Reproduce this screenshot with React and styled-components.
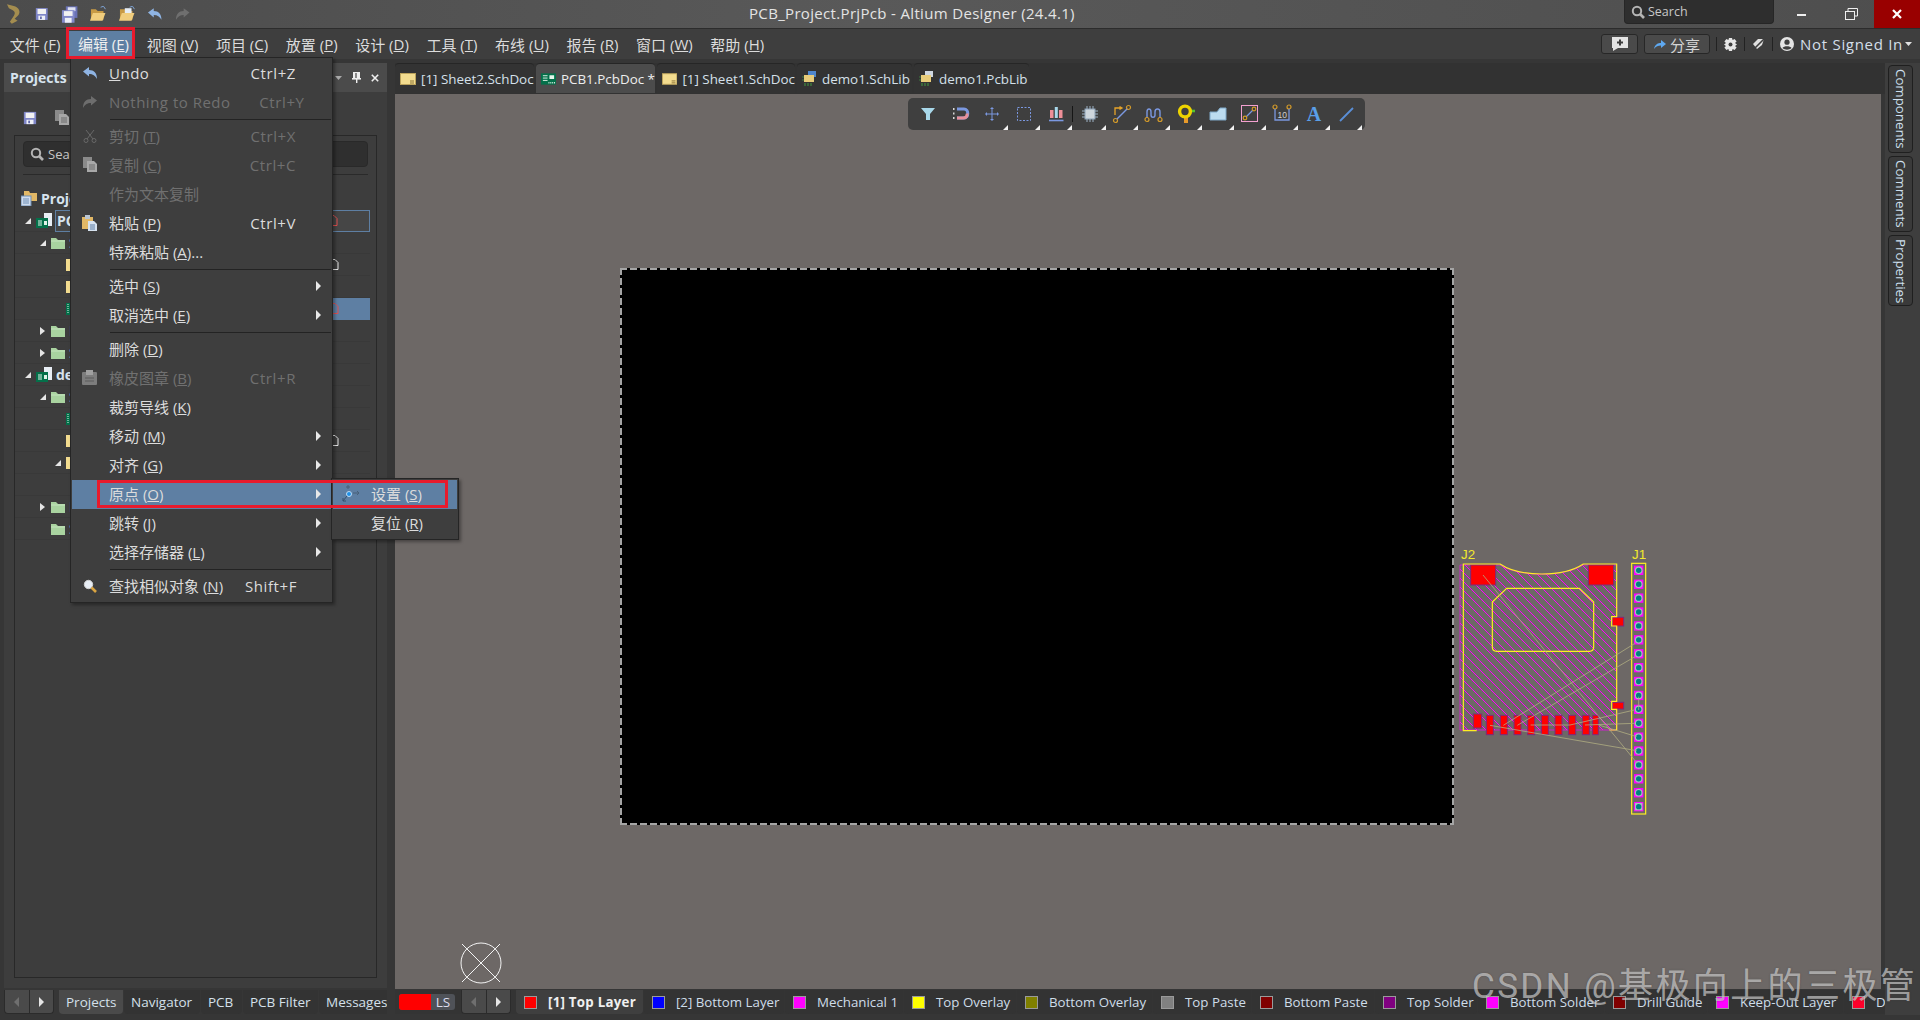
import React from 'react';
import styled, { createGlobalStyle, css } from 'styled-components';

const FONT = `"Open Sans", "Noto Sans CJK SC", sans-serif`;

const GlobalStyle = createGlobalStyle`
  html, body {
    margin: 0;
    padding: 0;
    background: #363636;
    font-family: ${FONT};
    overflow: hidden;
  }
  * { box-sizing: border-box; }
`;

const Page = styled.div`
  position: relative;
  width: 1920px;
  height: 1020px;
  display: flex;
  flex-direction: column;
  overflow: hidden;
  background: #363636;
  color: #d8d8d8;
`;

/* ---- title bar ---- */
const TitleBar = styled.div`
  height: 29px;
  flex: none;
  display: flex;
  align-items: flex-start;
  background: linear-gradient(90deg, #4c4c4c, #595959 45%, #4e4e4e);
  border-bottom: 1px solid #2c2c2c;
`;
const QuickIcons = styled.div`
  width: 190px;
  height: 28px;
  padding-left: 6px;
  display: flex;
  align-items: center;
  gap: 12px;
`;
const TitleText = styled.div`
  margin-left: 559px;
  line-height: 26px;
  font-size: 15px;
  letter-spacing: 0.33px;
  color: #e4e4e4;
  white-space: nowrap;
`;
const SearchBox = styled.div`
  margin-left: auto;
  width: 150px;
  height: 24px;
  padding-left: 6px;
  display: flex;
  align-items: center;
  gap: 3px;
  font-size: 12.5px;
  color: #c8c8c8;
  background: #2e2e2e;
  border: 1px solid #262626;
  border-top: 0;
  border-radius: 0 0 4px 4px;
`;
const WinButtons = styled.div`
  display: flex;
`;
const WinButton = styled.div`
  width: ${p => p.$w}px;
  height: 28px;
  display: flex;
  align-items: center;
  justify-content: center;
  background: ${p => (p.$close ? '#990000' : 'transparent')};
`;

/* ---- menu bar ---- */
const MenuBar = styled.div`
  height: 30px;
  flex: none;
  padding-left: 1px;
  padding-right: 8px;
  display: flex;
  align-items: stretch;
  background: #3e3e3e;
`;
const MenuItem = styled.div`
  position: relative;
  padding: 0 8.8px;
  display: flex;
  align-items: center;
  font-size: 15px;
  white-space: pre;
  color: #dcdcdc;
  ${p => p.$active && css`
    background: #5e7fa3;
    color: #f0f0f0;
    margin: 2px 3.6px 3px 0;
    padding-right: 5.2px;
  `}
`;
const MenuRight = styled.div`
  margin-left: auto;
  display: flex;
  align-items: center;
`;
const BarButton = styled.div`
  height: 20px;
  margin-right: 6px;
  width: ${p => p.$w}px;
  display: flex;
  align-items: center;
  justify-content: center;
  gap: 4px;
  font-size: 15px;
  color: #d5d5d5;
  background: #4a4a4a;
  border: 1px solid #272727;
  border-radius: 3px;
`;
const BarDivider = styled.div`
  width: 1px;
  height: 14px;
  background: #222;
`;
const BarIcon = styled.div`
  width: 27px;
  display: flex;
  justify-content: center;
`;
const UserName = styled.div`
  font-size: 15px;
  letter-spacing: 0.7px;
  color: #d4dfe9;
  margin-right: 2px;
`;

/* ---- annotation boxes ---- */
const RedFrame = styled.div`
  position: absolute;
  border: 3px solid #e81a2c;
  pointer-events: none;
  z-index: 30;
`;
const EditFrame = styled(RedFrame)`
  inset: -4px -1px -3px -3px;
`;
const OriginFrame = styled(RedFrame)`
  left: 26px;
  top: 422px;
  width: 351px;
  height: 28px;
`;

/* ---- drop down ---- */
const Dropdown = styled.div`
  position: absolute;
  left: 70px;
  top: 57px;
  width: 263px;
  height: 546px;
  padding: 1px;
  background: #3e3e3e;
  border: 1px solid #252525;
  box-shadow: 2px 2px 3px rgba(0, 0, 0, 0.35);
  z-index: 20;
`;
const SubMenu = styled.div`
  position: absolute;
  left: 260px;
  top: 420px;
  width: 128px;
  height: 62px;
  padding: 1px;
  background: #3e3e3e;
  border: 1px solid #252525;
  box-shadow: 2px 2px 3px rgba(0, 0, 0, 0.35);
`;
const DropRow = styled.div`
  height: 29px;
  padding-bottom: 2px;
  display: grid;
  grid-template-columns: ${p => (p.$sub ? '38px 1fr' : '37px 1fr 74px 35px')};
  align-items: center;
  font-size: 15px;
  white-space: pre;
  color: ${p => (p.$off ? '#707070' : '#dcdcdc')};
  background: ${p => (p.$hot ? '#5e7fa3' : 'transparent')};
`;
const DropIcon = styled.div`
  display: flex;
  justify-content: center;
  padding-right: 2px;
`;
const LatinLabel = styled.span`
  letter-spacing: 0.5px;
`;
const Shortcut = styled.div`
  text-align: right;
  letter-spacing: 0.6px;
`;
const SubArrow = styled.div`
  justify-self: end;
  margin-right: 10px;
  width: 0;
  height: 0;
  border-left: 5px solid #e8e8e8;
  border-top: 5px solid transparent;
  border-bottom: 5px solid transparent;
`;
const DropSep = styled.div`
  height: 5px;
  margin-left: 38px;
  display: flex;
  align-items: center;
  &::after {
    content: '';
    flex: 1;
    height: 1px;
    background: #232323;
  }
`;

/* ---- workspace ---- */
const Workspace = styled.div`
  flex: 1;
  min-height: 0;
  display: flex;
`;
const LeftColumn = styled.div`
  width: 395px;
  flex: none;
  padding: 4px 8px 6px 4px;
  display: flex;
  flex-direction: column;
`;
const Panel = styled.div`
  height: 925px;
  display: flex;
  flex-direction: column;
  background: #3d3d3d;
`;
const PanelHead = styled.div`
  height: 29px;
  flex: none;
  padding: 0 8px 0 6px;
  display: flex;
  align-items: center;
  background: #4b4b4b;
  font-size: 14px;
  font-weight: 700;
  color: #d7e3ee;
`;
const PanelHeadIcons = styled.div`
  margin-left: auto;
  display: flex;
  align-items: center;
  gap: 10px;
`;
const PanelTools = styled.div`
  height: 43px;
  flex: none;
  padding: 8px 0 0 19px;
  display: flex;
  align-items: center;
  gap: 17px;
`;
const TreeBox = styled.div`
  flex: 1;
  margin: 0 10px 10px;
  border: 1px solid #282828;
  display: flex;
  flex-direction: column;
`;
const TreeSearch = styled.div`
  height: 26px;
  flex: none;
  margin: 5px 8px 0;
  padding-left: 6px;
  display: flex;
  align-items: center;
  gap: 4px;
  font-size: 13px;
  color: #c6c6c6;
  background: #2f2f2f;
  border: 1px solid #292929;
  border-radius: 4px;
`;
const TreeRule = styled.div`
  height: 1px;
  flex: none;
  margin: 7px 8px 13px;
  background: #2a2a2a;
`;
const TreeRow = styled.div`
  height: 22px;
  flex: none;
  padding-left: ${p => (p.$level < 0 ? 6 : 6 + p.$level * 15)}px;
  margin-right: 6px;
  display: flex;
  align-items: center;
  font-size: 14px;
  border-bottom: 1px solid ${p => (p.$level < 0 ? 'transparent' : '#393939')};
`;
const TreeArrow = styled.div`
  width: 15px;
  flex: none;
  display: flex;
  padding-left: 4px;
`;
const TreeLabel = styled.div`
  flex: 1;
  height: 22px;
  margin-left: 3px;
  padding: 0 31px 0 1px;
  display: flex;
  align-items: center;
  font-weight: ${p => (p.$bold ? 700 : 400)};
  color: ${p => (p.$bold ? '#d7e3ee' : '#dcdcdc')};
  white-space: nowrap;
  ${p => p.$outlined && css`
    background: #464646;
    border: 1px solid #5e7fa3;
  `}
  ${p => p.$selected && css`
    background: #5e7fa3;
  `}
`;
const TreeName = styled.span`
  flex: 1;
`;

const PanelTabs = styled.div`
  height: 24px;
  margin-top: 2px;
  display: flex;
  overflow: hidden;
`;
const NavPair = styled.div`
  width: 50px;
  height: 24px;
  flex: none;
  display: flex;
  background: #4a4a4a;
  border-radius: 0 0 4px 4px;
  border: 1px solid #2b2b2b;
  border-top: 0;
`;
const PanelNav = styled(NavPair)`
  margin-right: 5px;
`;
const NavCell = styled.div`
  flex: 1;
  display: flex;
  align-items: center;
  justify-content: center;
  & + & { border-left: 1px solid #2b2b2b; }
`;
const NavArrow = styled.div`
  width: 0;
  height: 0;
  border-top: 5px solid transparent;
  border-bottom: 5px solid transparent;
  ${p => (p.$left
    ? 'border-right: 5px solid #6f6f6f;'
    : 'border-left: 5px solid #e6e6e6;')}
`;
const PanelTab = styled.div`
  width: ${p => p.$w}px;
  flex: none;
  margin-right: 1px;
  padding-left: 7px;
  display: flex;
  align-items: center;
  font-size: 13.5px;
  white-space: nowrap;
  overflow: hidden;
  color: #d5e0ea;
  background: ${p => (p.$active ? '#4a4a4a' : '#333333')};
  border-radius: 0 0 4px 4px;
`;

/* ---- centre ---- */
const Centre = styled.div`
  flex: 1;
  min-width: 0;
  padding-top: 4px;
  display: flex;
  flex-direction: column;
`;
const DocTabs = styled.div`
  height: 31px;
  flex: none;
  display: flex;
  gap: 2px;
  background: #323232;
`;
const DocTab = styled.div`
  width: ${p => p.$w}px;
  height: 30px;
  padding-left: 5px;
  display: flex;
  align-items: center;
  gap: 5px;
  font-size: 13.4px;
  white-space: nowrap;
  color: ${p => (p.$active ? '#eeeeee' : '#d5e0ea')};
  background: ${p => (p.$active ? '#4c4c4c' : '#333333')};
  border-radius: 4px 4px 0 0;
  border-top: 1px solid #262626;
`;
const Canvas = styled.div`
  position: relative;
  height: 895px;
  flex: none;
  margin-right: 4px;
  background: #6d6866;
`;
const FloatBar = styled.div`
  position: absolute;
  left: 513px;
  top: 4px;
  height: 32px;
  padding: 0 3px 0 4px;
  display: flex;
  align-items: center;
  background: #3f3f3f;
  border-radius: 5px;
`;
const ToolBtn = styled.div`
  position: relative;
  width: 32px;
  height: 32px;
  display: flex;
  align-items: center;
  justify-content: center;
  ${p => p.$corner && css`
    &::after {
      content: '';
      position: absolute;
      right: 0;
      bottom: 0;
      border-left: 5px solid transparent;
      border-bottom: 5px solid #f2f2f2;
    }
  `}
`;
const ToolSep = styled.div`
  width: 1px;
  height: 16px;
  margin-right: 1px;
  background: #161616;
`;
const Board = styled.div`
  position: absolute;
  left: 225px;
  top: 174px;
  width: 834px;
  height: 557px;
  background-color: #000;
  background-repeat: no-repeat;
  background-image:
    repeating-linear-gradient(90deg, #a5a5a5 0 7px, transparent 7px 10px),
    repeating-linear-gradient(90deg, #a5a5a5 0 7px, transparent 7px 10px),
    repeating-linear-gradient(0deg, #a5a5a5 0 7px, transparent 7px 10px),
    repeating-linear-gradient(0deg, #a5a5a5 0 7px, transparent 7px 10px);
  background-size: 100% 2px, 100% 2px, 2px 100%, 2px 100%;
  background-position: top left, bottom left, top left, top right;
`;
const PcbPart = styled.svg`
  position: absolute;
  left: 1045px;
  top: 446px;
`;
const OriginMark = styled.svg`
  position: absolute;
  left: 65px;
  top: 848px;
`;
const LayerBar = styled.div`
  height: 24px;
  margin-top: 1px;
  padding-left: 4px;
  display: flex;
  background: #343434;
  overflow: hidden;
`;
const LsGroup = styled.div`
  width: 56px;
  height: 16px;
  margin: 4px 6px 0 0;
  flex: none;
  display: flex;
  border-radius: 3px;
  overflow: hidden;
  background: #4f5258;
  font-size: 13.5px;
  line-height: 16px;
  color: #dde;
`;
const LsSwatch = styled.div`
  width: 32px;
  background: #ff0000;
`;
const LsText = styled.div`
  flex: 1;
  text-align: center;
`;
const LayerNav = styled(NavPair)`
  margin-right: 5px;
`;
const LayerTab = styled.div`
  width: ${p => p.$w}px;
  flex: none;
  margin-right: 1px;
  padding-left: 8px;
  display: flex;
  align-items: center;
  gap: 11px;
  font-size: 13.3px;
  font-weight: ${p => (p.$active ? 700 : 400)};
  letter-spacing: ${p => (p.$active ? '0.25px' : '0')};
  white-space: nowrap;
  overflow: hidden;
  color: ${p => (p.$active ? '#f0f0f0' : '#cfdde9')};
  background: ${p => (p.$active ? '#3f3f3f' : '#333333')};
  border-radius: 0 0 4px 4px;
`;
const LayerSwatch = styled.div`
  width: 13px;
  height: 13px;
  flex: none;
  background: ${p => p.$color};
  border: 1px solid #9a9a9a;
`;

/* ---- right strip ---- */
const RightStrip = styled.div`
  width: 35px;
  flex: none;
  margin: 4px 0 5px;
  padding: 2px 7px 0 3px;
  display: flex;
  flex-direction: column;
  gap: 3px;
  background: #3e3e3e;
`;
const SideTab = styled.div`
  height: ${p => p.$h}px;
  display: flex;
  align-items: center;
  justify-content: flex-start;
  padding-top: 3px;
  writing-mode: vertical-rl;
  font-size: 13.3px;
  color: #cfe0f0;
  background: #3a3a3a;
  border: 1px solid #1f1f1f;
  border-radius: 4px;
`;

const Watermark = styled.div`
  position: absolute;
  left: 1472px;
  top: 965px;
  font-size: 35px;
  letter-spacing: 2.4px;
  line-height: 44px;
  font-family: "Roboto", "Noto Sans CJK SC", sans-serif;
  color: rgba(222, 222, 222, 0.62);
  text-shadow: 0 0 2px rgba(60, 60, 60, 0.4);
  white-space: nowrap;
  z-index: 40;
`;

/* ---- icons ---- */
const Logo = () => (
  <svg width="16" height="22" viewBox="0 0 16 22" style={{ marginRight: 2 }}>
    <path d="M1 1 L9 3 C14 5 15 9 13 12 L9 16 L12 18 L6 21 L4 19 L8 13 C10 10 9 8 7 7 L3 5 Z" fill="#a48d4f" />
  </svg>
);
const Floppy = ({ size = 16 }) => (
  <svg width={size} height={size} viewBox="0 0 16 16">
    <rect x="1" y="1" width="14" height="14" fill="#7f86c8" />
    <rect x="3" y="2" width="10" height="6" fill="#f2f2f2" />
    <rect x="4" y="10" width="8" height="5" fill="#eef0f8" />
    <rect x="6" y="11" width="2" height="3" fill="#5e65a8" />
  </svg>
);
const FloppyPair = () => (
  <svg width="18" height="17" viewBox="0 0 18 17">
    <rect x="5" y="0" width="12" height="12" fill="#6a72b5" />
    <rect x="7" y="1" width="8" height="4" fill="#dfe2f2" />
    <rect x="1" y="4" width="13" height="13" fill="#8289c9" />
    <rect x="3" y="5" width="9" height="5" fill="#f2f2f2" />
    <rect x="4" y="12" width="7" height="5" fill="#eef0f8" />
  </svg>
);
const FolderOpen = ({ doc }) => (
  <svg width="17" height="16" viewBox="0 0 17 16">
    <path d="M1 3 H6 L8 5 H14 V14 H1 Z" fill="#c79a45" />
    {doc && <rect x="6" y="2" width="7" height="8" fill="#e6eef7" />}
    <path d="M3 7 H16 L13 15 H0 Z" fill="#f0cd7d" />
    <path d="M11 1 L14 0 L16 3" stroke="#7fa5d8" fill="none" />
  </svg>
);
const ArrowBack = ({ color = '#8fb4e3', flip }) => (
  <svg width="16" height="14" viewBox="0 0 16 14">
    <path
      d="M1 5.5 L7 1 V4 C12 4 15 7 15 13 C13 9.5 11 8 7 8 V10.5 Z"
      fill={color}
      transform={flip ? 'matrix(-1 0 0 1 16 0)' : undefined}
    />
  </svg>
);
const Scissors = () => (
  <svg width="14" height="14" viewBox="0 0 14 14" fill="none" stroke="#686868">
    <path d="M3 1 L10 10 M11 1 L4 10" />
    <circle cx="3" cy="11.5" r="2" />
    <circle cx="11" cy="11.5" r="2" />
  </svg>
);
const CopyIcon = () => (
  <svg width="16" height="15" viewBox="0 0 16 15">
    <rect x="1" y="0" width="9" height="11" fill="#8a8a8a" />
    <path d="M5 4 H12 L15 7 V15 H5 Z" fill="#a8a8a8" />
    <path d="M7 8 H13 M7 10 H13 M7 12 H13" stroke="#6c6c6c" />
  </svg>
);
const PasteIcon = () => (
  <svg width="16" height="16" viewBox="0 0 16 16">
    <rect x="0" y="2" width="11" height="12" fill="#e2b866" />
    <rect x="3" y="0" width="5" height="4" fill="#b9c5d2" />
    <path d="M6 6 H12 L15 9 V16 H6 Z" fill="#d7e3f0" />
    <path d="M8 10 H13 M8 12 H13 M8 14 H13" stroke="#5f7ea5" />
  </svg>
);
const StampIcon = () => (
  <svg width="15" height="15" viewBox="0 0 15 15">
    <rect x="0" y="2" width="15" height="13" rx="1" fill="#7d7d7d" />
    <rect x="4" y="0" width="7" height="5" fill="#a0a0a0" />
    <path d="M3 8 H12 M3 11 H12" stroke="#5c5c5c" />
  </svg>
);
const Magnifier = ({ lens = '#e8eef5', handle = '#d9a441', size = 14 }) => (
  <svg width={size} height={size} viewBox="0 0 14 14">
    <circle cx="5.5" cy="5.5" r="4.2" fill={lens} stroke="#d0d0d0" />
    <path d="M8.5 8.5 L13 13" stroke={handle} strokeWidth="2.6" />
  </svg>
);
const SearchGlass = ({ size = 14 }) => (
  <svg width={size} height={size} viewBox="0 0 14 14" fill="none" stroke="#b4b4b4" strokeWidth="2">
    <circle cx="6" cy="6" r="4.2" />
    <path d="M9 9 L13 13" strokeWidth="2.6" />
  </svg>
);
const OriginIcon = () => (
  <svg width="18" height="17" viewBox="0 0 18 17" fill="none">
    <path d="M6 0 V4 M4 2 H8" stroke="#486078" />
    <path d="M11 8 H17 M15 6 L17 8 L15 10" stroke="#486078" />
    <path d="M5 11 L1 16 M1 13 V16 H4" stroke="#35506c" />
    <circle cx="7" cy="9" r="2.5" fill="#1e90e8" stroke="#bcdcf5" />
  </svg>
);
const ChatPlus = () => (
  <svg width="18" height="16" viewBox="0 0 18 16">
    <path d="M1 1 H17 V12 H7 L2 15 V12 H1 Z" fill="#e4e4e4" />
    <path d="M9 3.5 V9.5 M6 6.5 H12" stroke="#3c3c3c" strokeWidth="2" />
  </svg>
);
const ShareArrow = () => (
  <svg width="12" height="11" viewBox="0 0 12 11">
    <path d="M0 10 C1 5 4 4 7 4 V1 L12 5 L7 9 V6.5 C4 6.5 2 7 0 10 Z" fill="#5ea8f0" />
  </svg>
);
const Gear = () => (
  <svg width="13" height="13" viewBox="0 0 13 13">
    <path d="M5 0 H8 L8.6 2 L10.6 1 L12.6 3.4 L11 5 L13 6.5 L11 8 L12.6 9.6 L10.6 12 L8.6 11 L8 13 H5 L4.4 11 L2.4 12 L0.4 9.6 L2 8 L0 6.5 L2 5 L0.4 3.4 L2.4 1 L4.4 2 Z" fill="#e6e6e6" />
    <circle cx="6.5" cy="6.5" r="2" fill="#3e3e3e" />
  </svg>
);
const NoPlug = () => (
  <svg width="14" height="14" viewBox="0 0 14 14">
    <path d="M1 7 L6 2 H12 L10 8 L5 12 Z" fill="#e0e0e0" />
    <path d="M1 13 L13 1" stroke="#3e3e3e" strokeWidth="1.6" />
  </svg>
);
const User = () => (
  <svg width="14" height="14" viewBox="0 0 14 14">
    <circle cx="7" cy="7" r="7" fill="#e4e4e4" />
    <circle cx="7" cy="5.2" r="2.6" fill="#3e3e3e" />
    <path d="M2.4 11 C4 8.5 10 8.5 11.6 11 C9 13.2 5 13.2 2.4 11 Z" fill="#3e3e3e" />
  </svg>
);
const Caret = ({ color = '#e0e0e0' }) => (
  <svg width="7" height="4" viewBox="0 0 7 4">
    <path d="M0 0 H7 L3.5 4 Z" fill={color} />
  </svg>
);
const SheetDoc = () => (
  <svg width="16" height="12" viewBox="0 0 16 12">
    <rect x="0.5" y="0.5" width="15" height="11" fill="#f3dc8f" stroke="#bca35c" />
    <path d="M10 8 H14 M10 10 H14" stroke="#8a7438" />
  </svg>
);
const PcbDoc = () => (
  <svg width="16" height="12" viewBox="0 0 16 12">
    <rect width="16" height="12" fill="#04704a" />
    <path d="M2 2.5 H7 M2 5 H7 M2 7.5 H7" stroke="#e6f5ec" />
    <rect x="9" y="2" width="5" height="4" fill="#e6f5ec" />
    <path d="M8 10 H15" stroke="#e6f5ec" strokeDasharray="1 1" strokeWidth="1.5" />
  </svg>
);
const LibDoc = ({ pcb }) => (
  <svg width="15" height="15" viewBox="0 0 15 15">
    <rect x="6" y="0" width="8" height="6" fill={pcb ? '#cfd7e0' : '#4f86cc'} />
    <rect x="2" y="4" width="10" height="7" fill="#e8cc7a" />
    <path d="M3 12 V15 M6 12 V15 M9 12 V15" stroke="#3e7c3e" strokeWidth="1.4" />
    <path d="M0 6 H2 M0 9 H2" stroke="#3e7c3e" />
  </svg>
);
const FolderGreen = () => (
  <svg width="14" height="12" viewBox="0 0 14 12">
    <path d="M0 1 H5 L7 3 H14 V12 H0 Z" fill="#a9d3a0" />
    <path d="M0 4 H14" stroke="#c6e4bf" />
  </svg>
);
const YellowFile = () => (
  <svg width="14" height="12" viewBox="0 0 14 12">
    <rect width="14" height="12" fill="#f3dc8f" />
  </svg>
);
const PcbFile = () => (
  <svg width="14" height="12" viewBox="0 0 14 12">
    <rect width="14" height="12" fill="#04704a" />
    <path d="M2 1 V11" stroke="#dff2e8" strokeDasharray="1 1" />
  </svg>
);
const ProjectIcon = () => (
  <svg width="16" height="16" viewBox="0 0 16 16">
    <rect x="8" y="0" width="8" height="13" fill="#e8eef5" />
    <rect x="0" y="5" width="12" height="10" fill="#04704a" />
    <path d="M2 8 H6 M2 10 H6 M2 12 H6" stroke="#dff2e8" />
    <rect x="8" y="8" width="3" height="4" fill="#dff2e8" />
  </svg>
);
const GroupIcon = () => (
  <svg width="16" height="15" viewBox="0 0 16 15">
    <path d="M3 0 H8 L9 2 H16 V10 H3 Z" fill="#e2b866" />
    <rect x="0" y="5" width="10" height="10" fill="#cfdcee" stroke="#6f8fb5" />
    <path d="M2 8 H8 M2 10 H8 M2 12 H8" stroke="#6f8fb5" />
  </svg>
);
const StatusDoc = ({ color }) => (
  <svg width="10" height="11" viewBox="0 0 10 11" fill="none" stroke={color}>
    <path d="M1 0.5 H6 L9 3.5 V10.5 H1 Z" />
  </svg>
);
const Pin = () => (
  <svg width="9" height="11" viewBox="0 0 9 11">
    <rect x="1" y="0" width="7" height="7" fill="#efefef" />
    <rect x="3" y="1" width="2" height="5" fill="#8a8a8a" />
    <rect x="0" y="6" width="9" height="1.6" fill="#efefef" />
    <rect x="4" y="7" width="1.4" height="4" fill="#efefef" />
  </svg>
);
const CloseX = ({ size = 9, color = '#efefef', w = 2 }) => (
  <svg width={size} height={size} viewBox="0 0 10 10">
    <path d="M1 1 L9 9 M9 1 L1 9" stroke={color} strokeWidth={w} />
  </svg>
);
const ExpandedArrow = () => (
  <svg width="6" height="6" viewBox="0 0 6 6">
    <path d="M6 0 V6 H0 Z" fill="#e6e6e6" />
  </svg>
);
const CollapsedArrow = () => (
  <svg width="5" height="8" viewBox="0 0 5 8">
    <path d="M0 0 L5 4 L0 8 Z" fill="#e6e6e6" />
  </svg>
);

const T = ({ children }) => (
  <svg width="20" height="20" viewBox="0 0 20 20" fill="none">{children}</svg>
);
const Ring = ({ x, y, r = 2 }) => <circle cx={x} cy={y} r={r} stroke="#d39a2a" strokeWidth="1.2" fill="none" />;
const toolIcons = [
  <T><path d="M3 4 H17 L12 10 V16 H8 V10 Z" fill="#a8d8ea" /></T>,
  <T>
    <path d="M3 5 H4.5 M3 9.5 H4.5 M3 14 H4.5" stroke="#d8d8d8" strokeWidth="2" />
    <path d="M7 5 H14 C19 5 19 14 14 14 H7" stroke="#7b98e0" strokeWidth="3" />
    <path d="M13 14 C16 14 17.5 12 17 9.5" stroke="#e8909a" strokeWidth="3" />
    <path d="M7 14 H13" stroke="#e8909a" strokeWidth="3" />
  </T>,
  <T><path d="M10 3 V17 M3 10 H17 M8.5 4.5 H11.5 M8.5 15.5 H11.5 M4.5 8.5 V11.5 M15.5 8.5 V11.5" stroke="#7b98e0" /></T>,
  <T><rect x="3.5" y="3.5" width="13" height="13" stroke="#7b98e0" strokeDasharray="2 1.5" /></T>,
  <T>
    <rect x="4" y="6" width="3.5" height="8" fill="#ee8f98" />
    <rect x="8.8" y="3" width="3" height="11" fill="#a8d8ea" />
    <rect x="13" y="6" width="3.5" height="8" fill="#ee8f98" />
    <path d="M3 16.5 H17.5" stroke="#7b98e0" strokeWidth="1.6" />
  </T>,
  <T>
    <rect x="5" y="5" width="10" height="10" fill="#ced6dd" stroke="#8aa0b5" />
    <path d="M7 2 V5 M10 2 V5 M13 2 V5 M7 15 V18 M10 15 V18 M13 15 V18 M2 7 H5 M2 10 H5 M2 13 H5 M15 7 H18 M15 10 H18 M15 13 H18" stroke="#9db2c5" />
  </T>,
  <T>
    <path d="M3 11 V4 H9 M7.5 2.5 L10 4 L7.5 5.5" stroke="#e6a42a" strokeWidth="1.3" />
    <Ring x={3.5} y={16.5} />
    <Ring x={16.5} y={3.5} />
    <path d="M5 15 L15 5" stroke="#7b98e0" strokeWidth="1.5" />
  </T>,
  <T>
    <path d="M3 14 V8 C3 4 7 4 7 8 V11 C7 14 11 14 11 11 V8 C11 4 16 4 16 8 V14" stroke="#7b98e0" strokeWidth="1.4" />
    <Ring x={3} y={15.5} />
    <Ring x={16} y={15.5} />
  </T>,
  <T>
    <path d="M14 7 H19" stroke="#56c22c" strokeWidth="2.6" />
    <rect x="8" y="12" width="4" height="7" fill="#e89a2a" />
    <circle cx="9" cy="7.5" r="5.4" stroke="#eed400" strokeWidth="3.4" />
  </T>,
  <T><path d="M2 8 H9 L12 4 H18 V16 H2 Z" fill="#bcdcf0" stroke="#7ea8c8" /></T>,
  <T>
    <rect x="1.5" y="1.5" width="16" height="16" stroke="#f2a0d0" />
    <path d="M6 13 L13 6" stroke="#7b98e0" strokeWidth="1.3" />
    <Ring x={5} y={14} r={1.8} />
    <Ring x={14} y={5} r={1.8} />
  </T>,
  <T>
    <Ring x={3} y={3} />
    <Ring x={17} y={3} />
    <path d="M3 5 V16 H17 V5" stroke="#7b98e0" strokeWidth="1.3" />
    <text x="5.5" y="13.5" fontSize="8.5" fill="#d0d0d0" fontFamily="Liberation Sans">10</text>
  </T>,
  <T><text x="10" y="17" textAnchor="middle" fontSize="20" fontWeight="700" fill="#5a9fe8" fontFamily="Liberation Serif">A</text></T>,
  <T><path d="M4 17 L17 4" stroke="#5a8fd8" strokeWidth="1.8" /></T>,
];

/* PCB part drawn in zoomed coordinates (3x the screen pixels) */
const bottomPads = [139, 181, 222, 263, 304, 345, 386, 427];
const headerPads = Array.from({ length: 18 }, (_, i) => 91 + i * 41.7);
const ratsNest = [
  'M129 105 L590 668',
  'M190 556 L585 310',
  'M232 556 L585 350',
  'M272 555 L390 555 L583 510',
  'M435 555 L585 550',
  'M476 555 L590 590',
  'M150 556 L590 632',
  'M596 470 L596 510',
];

const PcbDrawing = () => (
  <PcbPart width="220" height="290" viewBox="0 0 660 870">
    <defs>
      <pattern id="hatch" width="27" height="27" patternUnits="userSpaceOnUse">
        <path d="M-3 -3 L30 30 M-3 24 L3 30 M24 -3 L30 3" stroke="#ff00ff" strokeWidth="3" />
      </pattern>
    </defs>
    <path d="M60 75 H180 C240 112 370 112 430 75 H530 V570 H60 Z" fill="url(#hatch)" stroke="#ff00ff" strokeWidth="2" />
    <g fill="#ff0000" stroke="#7d2a7d" strokeWidth="3">
      <rect x="92" y="75" width="75" height="60" />
      <rect x="445" y="75" width="76" height="60" />
      <rect x="517" y="232" width="34" height="26" />
      <rect x="517" y="487" width="34" height="20" />
      <rect x="100" y="522" width="25" height="42" />
      {bottomPads.map(x => <rect key={x} x={x} y="526" width="21" height="58" />)}
      <rect x="458" y="526" width="17" height="58" />
    </g>
    <g fill="none" stroke="#ffee22" strokeWidth="3.6">
      <path d="M110 572 H70 V72 H180 C240 112 370 112 430 72 H530 V230 H515 V258 H530 V484 H515 V508 H530 V570 H508" />
      <path d="M200 145 H418 L461 186 V322 Q461 334 448 334 H170 Q157 334 157 322 V186 Z" />
      <rect x="575" y="70" width="42" height="752" />
    </g>
    {headerPads.map((y, i) => (
      <g key={y}>
        <rect x="582" y={y - 14} width="28" height="28" fill="#ff00ff" />
        {i === 17
          ? <rect x="585" y={y - 11} width="22" height="22" fill="#a8c0c0" />
          : <circle cx="596" cy={y} r="11.5" fill="#a8c0c0" />}
        <circle cx="596" cy={y} r="8" fill="#008080" />
      </g>
    ))}
    <g fill="none" stroke="#b0ad82" strokeWidth="2.4">
      {ratsNest.map(d => <path key={d} d={d} />)}
    </g>
    <g fill="#f2e82c" fontFamily="Liberation Sans" fontSize="40">
      <text x="63" y="58">J2</text>
      <text x="576" y="58">J1</text>
    </g>
  </PcbPart>
);

/* ---- data ---- */
const menus = [
  ['文件', 'F'], ['编辑', 'E'], ['视图', 'V'], ['项目', 'C'], ['放置', 'P'], ['设计', 'D'],
  ['工具', 'T'], ['布线', 'U'], ['报告', 'R'], ['窗口', 'W'], ['帮助', 'H'],
];

const editMenu = [
  { plain: <><u>U</u>ndo</>, shortcut: 'Ctrl+Z', icon: <ArrowBack /> },
  { plain: 'Nothing to Redo', off: true, shortcut: 'Ctrl+Y', icon: <ArrowBack color="#6d6d6d" flip /> },
  { sep: true },
  { label: '剪切', key: 'T', off: true, shortcut: 'Ctrl+X', icon: <Scissors /> },
  { label: '复制', key: 'C', off: true, shortcut: 'Ctrl+C', icon: <CopyIcon /> },
  { label: '作为文本复制', off: true },
  { label: '粘贴', key: 'P', shortcut: 'Ctrl+V', icon: <PasteIcon /> },
  { label: '特殊粘贴', key: 'A', tail: '...' },
  { sep: true },
  { label: '选中', key: 'S', more: true },
  { label: '取消选中', key: 'E', more: true },
  { sep: true },
  { label: '删除', key: 'D' },
  { label: '橡皮图章', key: 'B', off: true, shortcut: 'Ctrl+R', icon: <StampIcon /> },
  { label: '裁剪导线', key: 'K' },
  { label: '移动', key: 'M', more: true },
  { label: '对齐', key: 'G', more: true },
  { label: '原点', key: 'O', more: true, hot: true },
  { label: '跳转', key: 'J', more: true },
  { label: '选择存储器', key: 'L', more: true },
  { sep: true },
  { label: '查找相似对象', key: 'N', shortcut: 'Shift+F', icon: <Magnifier /> },
];

const tree = [
  { level: -1, name: 'Projects', icon: <GroupIcon />, bold: true },
  { level: 0, name: 'PCB_Project.PrjPcb', icon: <ProjectIcon />, arrow: 'open', bold: true, outlined: true, status: '#e05050' },
  { level: 1, name: 'Source Documents', icon: <FolderGreen />, arrow: 'open' },
  { level: 2, name: 'Sheet2.SchDoc', icon: <YellowFile />, status: '#e8e8e8' },
  { level: 2, name: 'Sheet1.SchDoc', icon: <YellowFile /> },
  { level: 2, name: 'PCB1.PcbDoc', icon: <PcbFile />, selected: true, status: '#e05050' },
  { level: 1, name: 'Libraries', icon: <FolderGreen />, arrow: 'closed' },
  { level: 1, name: 'Settings', icon: <FolderGreen />, arrow: 'closed' },
  { level: 0, name: 'demo1.LibPkg', icon: <ProjectIcon />, arrow: 'open', bold: true },
  { level: 1, name: 'Source Documents', icon: <FolderGreen />, arrow: 'open' },
  { level: 2, name: 'demo1.PcbLib', icon: <PcbFile /> },
  { level: 2, name: 'demo1.SchLib', icon: <YellowFile />, status: '#e8e8e8' },
  { level: 2, name: 'Generated', icon: <YellowFile />, arrow: 'open' },
  { level: 3, name: 'Documents' },
  { level: 1, name: 'Libraries', icon: <FolderGreen />, arrow: 'closed' },
  { level: 1, name: 'Settings', icon: <FolderGreen /> },
];

const docs = [
  { name: '[1] Sheet2.SchDoc', w: 139, icon: <SheetDoc /> },
  { name: 'PCB1.PcbDoc *', w: 119, icon: <PcbDoc />, active: true },
  { name: '[1] Sheet1.SchDoc', w: 138, icon: <SheetDoc /> },
  { name: 'demo1.SchLib', w: 115, icon: <LibDoc /> },
  { name: 'demo1.PcbLib', w: 115, icon: <LibDoc pcb /> },
];

const panelTabs = [
  { name: 'Projects', w: 64, active: true },
  { name: 'Navigator', w: 76 },
  { name: 'PCB', w: 41 },
  { name: 'PCB Filter', w: 75 },
  { name: 'Messages', w: 80 },
];

const layers = [
  { name: '[1] Top Layer', color: '#ff0000', w: 127, active: true },
  { name: '[2] Bottom Layer', color: '#0000ff', w: 140 },
  { name: 'Mechanical 1', color: '#ff00ff', w: 118 },
  { name: 'Top Overlay', color: '#ffff00', w: 112 },
  { name: 'Bottom Overlay', color: '#808000', w: 135 },
  { name: 'Top Paste', color: '#808080', w: 98 },
  { name: 'Bottom Paste', color: '#800000', w: 122 },
  { name: 'Top Solder', color: '#800080', w: 102 },
  { name: 'Bottom Solder', color: '#ff00ff', w: 126 },
  { name: 'Drill Guide', color: '#800000', w: 102 },
  { name: 'Keep-Out Layer', color: '#ff00ff', w: 135 },
  { name: 'Drill Drawing', color: '#ff002a', w: 60 },
];

const Label = ({ item }) => (
  <span>
    {item.label}
    {item.key && <> (<u>{item.key}</u>)</>}
    {item.tail}
  </span>
);

const EditDropdown = () => (
  <Dropdown>
    {editMenu.map((item, i) => (item.sep ? <DropSep key={i} /> : (
      <DropRow key={i} $off={item.off} $hot={item.hot}>
        <DropIcon>{item.icon}</DropIcon>
        {item.plain ? <LatinLabel>{item.plain}</LatinLabel> : <Label item={item} />}
        <Shortcut>{item.shortcut}</Shortcut>
        {item.more ? <SubArrow /> : <span />}
      </DropRow>
    )))}
    <SubMenu>
      <DropRow $sub $hot>
        <DropIcon><OriginIcon /></DropIcon>
        <Label item={{ label: '设置', key: 'S' }} />
      </DropRow>
      <DropRow $sub>
        <span />
        <Label item={{ label: '复位', key: 'R' }} />
      </DropRow>
    </SubMenu>
    <OriginFrame />
  </Dropdown>
);

export default function App() {
  return (
    <Page>
      <GlobalStyle />
      <TitleBar>
        <QuickIcons>
          <Logo />
          <Floppy size={14} />
          <FloppyPair />
          <FolderOpen />
          <FolderOpen doc />
          <ArrowBack />
          <ArrowBack color="#6f6f6f" flip />
        </QuickIcons>
        <TitleText>PCB_Project.PrjPcb - Altium Designer (24.4.1)</TitleText>
        <SearchBox><SearchGlass />Search</SearchBox>
        <WinButtons>
          <WinButton $w={54}>
            <svg width="9" height="3" viewBox="0 0 9 3"><rect y="1" width="9" height="2" fill="#efefef" /></svg>
          </WinButton>
          <WinButton $w={46}>
            <svg width="13" height="12" viewBox="0 0 13 12" fill="none" stroke="#efefef">
              <rect x="0.5" y="3.5" width="9" height="8" />
              <path d="M3 3 V0.5 H12.5 V8 H10" />
            </svg>
          </WinButton>
          <WinButton $w={46} $close><CloseX size={10} w={2.2} color="#fff" /></WinButton>
        </WinButtons>
      </TitleBar>

      <MenuBar>
        {menus.map(([name, key]) => (
          <MenuItem key={key} $active={key === 'E'}>
            {name} (<u>{key}</u>)
            {key === 'E' && <EditFrame />}
          </MenuItem>
        ))}
        <MenuRight>
          <BarButton $w={37}><ChatPlus /></BarButton>
          <BarButton $w={66}><ShareArrow />分享</BarButton>
          <BarDivider />
          <BarIcon><Gear /></BarIcon>
          <BarDivider />
          <BarIcon><NoPlug /></BarIcon>
          <BarDivider />
          <BarIcon><User /></BarIcon>
          <UserName>Not Signed In</UserName>
          <Caret />
        </MenuRight>
      </MenuBar>

      <Workspace>
        <LeftColumn>
          <Panel>
            <PanelHead>
              Projects
              <PanelHeadIcons>
                <Caret color="#aaa" />
                <Pin />
                <CloseX size={8} />
              </PanelHeadIcons>
            </PanelHead>
            <PanelTools>
              <Floppy size={14} />
              <CopyIcon />
            </PanelTools>
            <TreeBox>
              <TreeSearch><SearchGlass />Search</TreeSearch>
              <TreeRule />
              {tree.map((row, i) => (
                <TreeRow key={i} $level={row.level}>
                  {row.level >= 0 && (
                    <TreeArrow>
                      {row.arrow === 'open' && <ExpandedArrow />}
                      {row.arrow === 'closed' && <CollapsedArrow />}
                    </TreeArrow>
                  )}
                  {row.icon}
                  <TreeLabel $bold={row.bold} $outlined={row.outlined} $selected={row.selected}>
                    <TreeName>{row.name}</TreeName>
                    {row.status && <StatusDoc color={row.status} />}
                  </TreeLabel>
                </TreeRow>
              ))}
            </TreeBox>
          </Panel>
          <PanelTabs>
            <PanelNav>
              <NavCell><NavArrow $left /></NavCell>
              <NavCell><NavArrow /></NavCell>
            </PanelNav>
            {panelTabs.map(t => (
              <PanelTab key={t.name} $w={t.w} $active={t.active}>{t.name}</PanelTab>
            ))}
          </PanelTabs>
        </LeftColumn>

        <Centre>
          <DocTabs>
            {docs.map(d => (
              <DocTab key={d.name} $w={d.w} $active={d.active}>{d.icon}{d.name}</DocTab>
            ))}
          </DocTabs>
          <Canvas>
            <FloatBar>
              {toolIcons.map((icon, i) => (
                <React.Fragment key={i}>
                  {i === 5 && <ToolSep />}
                  <ToolBtn $corner={i >= 2}>{icon}</ToolBtn>
                </React.Fragment>
              ))}
            </FloatBar>
            <Board />
            <PcbDrawing />
            <OriginMark width="42" height="42" viewBox="0 0 42 42" fill="none" stroke="#f4f4f4">
              <circle cx="21" cy="21" r="20" />
              <path d="M2 2 L40 40 M40 2 L2 40" />
            </OriginMark>
          </Canvas>
          <LayerBar>
            <LsGroup><LsSwatch /><LsText>LS</LsText></LsGroup>
            <LayerNav>
              <NavCell><NavArrow $left /></NavCell>
              <NavCell><NavArrow /></NavCell>
            </LayerNav>
            {layers.map(l => (
              <LayerTab key={l.name} $w={l.w} $active={l.active}>
                <LayerSwatch $color={l.color} />
                {l.name}
              </LayerTab>
            ))}
          </LayerBar>
        </Centre>

        <RightStrip>
          <SideTab $h={88}>Components</SideTab>
          <SideTab $h={76}>Comments</SideTab>
          <SideTab $h={71}>Properties</SideTab>
        </RightStrip>
      </Workspace>

      <EditDropdown />
      <Watermark>CSDN @基极向上的三极管</Watermark>
    </Page>
  );
}
